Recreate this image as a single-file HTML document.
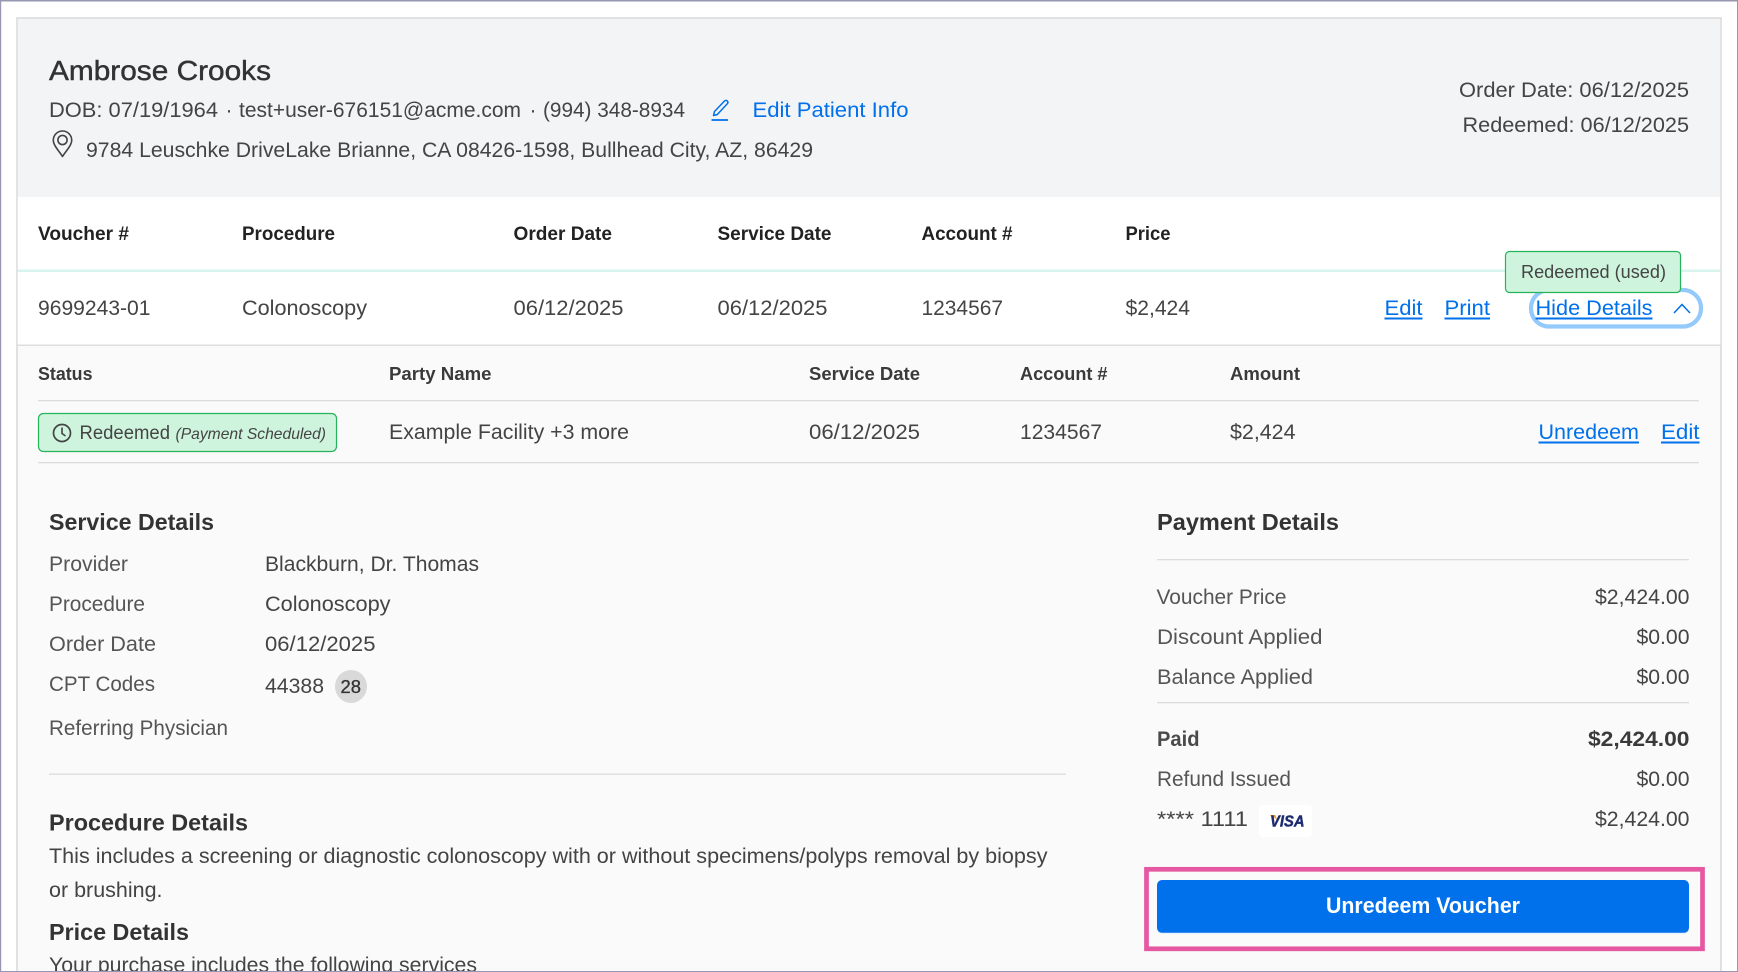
<!DOCTYPE html>
<html lang="en">
<head>
<meta charset="utf-8">
<title>Voucher Details</title>
<style>
html,body{margin:0;padding:0;background:#fff;width:1738px;height:972px;overflow:hidden}
svg{display:block}
text{font-family:"Liberation Sans",sans-serif;font-size:21px;fill:#444;}
.b{font-weight:700}
.h{font-weight:700;font-size:19px;fill:#222}
.s{font-weight:700;font-size:18.5px;fill:#3a3a3a}
.t{font-weight:700;font-size:23.5px;fill:#333}
.l{fill:#0070eb}
.d{fill:#555}
</style>
</head>
<body>
<svg width="1738" height="972" viewBox="0 0 1738 972" xmlns="http://www.w3.org/2000/svg">
<rect width="1738" height="972" fill="#fff"/>
<rect x="17" y="18" width="1704" height="960" fill="#fafafa" stroke="#d8d8d8" stroke-width="1.5"/>
<rect x="17.7" y="19" width="1702.6" height="178" fill="#f3f4f6"/>
<rect x="17.7" y="197" width="1702.6" height="148" fill="#fff"/>
<rect x="17.7" y="269.5" width="1702.6" height="2.5" fill="#d9f4ee"/>
<rect x="17.7" y="344.5" width="1702.6" height="1.5" fill="#dedede"/>

<text x="49" y="80" textLength="222" lengthAdjust="spacingAndGlyphs" style="font-size:28px;fill:#333;stroke:#333;stroke-width:.45">Ambrose Crooks</text>
<text x="49" y="117" textLength="169" lengthAdjust="spacingAndGlyphs">DOB: 07/19/1964</text>
<text x="225.500" y="117">·</text>
<text x="239" y="117" textLength="282" lengthAdjust="spacingAndGlyphs">test+user-676151@acme.com</text>
<text x="529.500" y="117">·</text>
<text x="543" y="117" textLength="142" lengthAdjust="spacingAndGlyphs">(994) 348-8934</text>
<g fill="none" stroke="#0070eb" stroke-width="1.5">
<path d="M713.5 115.5l1-4 10-10.5c1-.9 2-.9 2.8 0s.8 2 0 2.800l-10 10.700z" stroke-linejoin="round"/>
<path d="M711.500 120h16.500" stroke-width="1.800"/>
</g>
<text class="l" x="752.500" y="117" textLength="156" lengthAdjust="spacingAndGlyphs">Edit Patient Info</text>
<g fill="none" stroke="#444" stroke-width="1.600">
<path d="M62.500 156.500c-3-5-9.200-11-9.200-16.300a9.200 9.200 0 0 1 18.400 0c0 5.300-6.200 11.300-9.200 16.300z" stroke-linejoin="round"/>
<circle cx="62.500" cy="140" r="4.600"/>
</g>
<text x="86" y="157" textLength="727" lengthAdjust="spacingAndGlyphs">9784 Leuschke DriveLake Brianne, CA 08426-1598, Bullhead City, AZ, 86429</text>
<text x="1459" y="97" textLength="230" lengthAdjust="spacingAndGlyphs">Order Date: 06/12/2025</text>
<text x="1462.500" y="132" textLength="226.500" lengthAdjust="spacingAndGlyphs">Redeemed: 06/12/2025</text>

<text class="h" x="38" y="240" textLength="91" lengthAdjust="spacingAndGlyphs">Voucher #</text>
<text class="h" x="242" y="240" textLength="93" lengthAdjust="spacingAndGlyphs">Procedure</text>
<text class="h" x="513.500" y="240" textLength="98.500" lengthAdjust="spacingAndGlyphs">Order Date</text>
<text class="h" x="717.500" y="240" textLength="114" lengthAdjust="spacingAndGlyphs">Service Date</text>
<text class="h" x="921.500" y="240" textLength="91" lengthAdjust="spacingAndGlyphs">Account #</text>
<text class="h" x="1125.500" y="240" textLength="45" lengthAdjust="spacingAndGlyphs">Price</text>

<text x="38" y="315" textLength="112.500" lengthAdjust="spacingAndGlyphs">9699243-01</text>
<text x="242" y="315" textLength="125" lengthAdjust="spacingAndGlyphs">Colonoscopy</text>
<text x="513.500" y="315" textLength="110" lengthAdjust="spacingAndGlyphs">06/12/2025</text>
<text x="717.500" y="315" textLength="110" lengthAdjust="spacingAndGlyphs">06/12/2025</text>
<text x="921.500" y="315" textLength="81.500" lengthAdjust="spacingAndGlyphs">1234567</text>
<text x="1125.500" y="315" textLength="64.500" lengthAdjust="spacingAndGlyphs">$2,424</text>

<text class="l" x="1384.500" y="315" textLength="38" lengthAdjust="spacingAndGlyphs">Edit</text>
<rect x="1384.500" y="317.500" width="38" height="2" fill="#0070eb"/>
<text class="l" x="1444.500" y="315" textLength="45.500" lengthAdjust="spacingAndGlyphs">Print</text>
<rect x="1444.500" y="317.500" width="45.500" height="2" fill="#0070eb"/>
<rect x="1531" y="290" width="170" height="36.500" rx="18" fill="#fff" stroke="#93c9fb" stroke-width="4.200"/>
<text class="l" x="1535.500" y="315" textLength="117" lengthAdjust="spacingAndGlyphs">Hide Details</text>
<rect x="1535.500" y="317.500" width="117" height="2" fill="#0070eb"/>
<path d="M1674 313l8-8.500 8 8.500" fill="none" stroke="#0070eb" stroke-width="1.500"/>
<rect x="1505.500" y="251.500" width="175" height="41" rx="4" fill="#cff4dd" stroke="#25b35c" stroke-width="1.200"/>
<text x="1521" y="278" textLength="145" lengthAdjust="spacingAndGlyphs" style="font-size:18px">Redeemed (used)</text>

<text class="s" x="38" y="380" textLength="54.500" lengthAdjust="spacingAndGlyphs">Status</text>
<text class="s" x="389" y="380" textLength="102.500" lengthAdjust="spacingAndGlyphs">Party Name</text>
<text class="s" x="809" y="380" textLength="111" lengthAdjust="spacingAndGlyphs">Service Date</text>
<text class="s" x="1020" y="380" textLength="87.500" lengthAdjust="spacingAndGlyphs">Account #</text>
<text class="s" x="1230" y="380" textLength="70" lengthAdjust="spacingAndGlyphs">Amount</text>
<rect x="38" y="400" width="1661" height="1.300" fill="#dcdcdc"/>
<rect x="38.500" y="413.500" width="298" height="38" rx="5" fill="#cff4dd" stroke="#25b35c" stroke-width="1.200"/>
<circle cx="62" cy="433" r="8.500" fill="none" stroke="#444" stroke-width="1.700"/>
<path d="M62 427.500v6l3.500 2.500" fill="none" stroke="#444" stroke-width="1.600"/>
<text x="79.500" y="439" textLength="90.500" lengthAdjust="spacingAndGlyphs" style="font-size:19.500px">Redeemed</text>
<text x="175.500" y="439" textLength="150.500" lengthAdjust="spacingAndGlyphs" style="font-size:16px;font-style:italic">(Payment Scheduled)</text>
<text x="389" y="439" textLength="240" lengthAdjust="spacingAndGlyphs">Example Facility +3 more</text>
<text x="809" y="439" textLength="111" lengthAdjust="spacingAndGlyphs">06/12/2025</text>
<text x="1020" y="439" textLength="82" lengthAdjust="spacingAndGlyphs">1234567</text>
<text x="1230" y="439" textLength="65.500" lengthAdjust="spacingAndGlyphs">$2,424</text>
<text class="l" x="1538.500" y="439" textLength="100.500" lengthAdjust="spacingAndGlyphs">Unredeem</text>
<rect x="1538.500" y="441.500" width="100.500" height="2" fill="#0070eb"/>
<text class="l" x="1661" y="439" textLength="38.500" lengthAdjust="spacingAndGlyphs">Edit</text>
<rect x="1661" y="441.500" width="38.500" height="2" fill="#0070eb"/>
<rect x="38" y="462" width="1661" height="1.300" fill="#dcdcdc"/>

<text class="t" x="49" y="530" textLength="165" lengthAdjust="spacingAndGlyphs">Service Details</text>
<text class="d" x="49" y="571" textLength="79" lengthAdjust="spacingAndGlyphs">Provider</text>
<text x="265" y="571" textLength="214" lengthAdjust="spacingAndGlyphs">Blackburn, Dr. Thomas</text>
<text class="d" x="49" y="611" textLength="96" lengthAdjust="spacingAndGlyphs">Procedure</text>
<text x="265" y="611" textLength="125.500" lengthAdjust="spacingAndGlyphs">Colonoscopy</text>
<text class="d" x="49" y="651" textLength="107" lengthAdjust="spacingAndGlyphs">Order Date</text>
<text x="265" y="651" textLength="110.500" lengthAdjust="spacingAndGlyphs">06/12/2025</text>
<text class="d" x="49" y="691" textLength="106" lengthAdjust="spacingAndGlyphs">CPT Codes</text>
<text x="265" y="693" textLength="59" lengthAdjust="spacingAndGlyphs">44388</text>
<ellipse cx="351" cy="686.500" rx="16" ry="16.500" fill="#d9d9d9"/>
<text x="340.500" y="693" textLength="20.500" lengthAdjust="spacingAndGlyphs" style="font-size:18px;fill:#333;stroke:#333;stroke-width:.3">28</text>
<text class="d" x="49" y="735" textLength="179" lengthAdjust="spacingAndGlyphs">Referring Physician</text>
<rect x="49" y="773.500" width="1017" height="1.300" fill="#dcdcdc"/>
<text class="t" x="49" y="830.500" textLength="199" lengthAdjust="spacingAndGlyphs">Procedure Details</text>
<text x="49" y="863" textLength="998.500" lengthAdjust="spacingAndGlyphs">This includes a screening or diagnostic colonoscopy with or without specimens/polyps removal by biopsy</text>
<text x="49" y="897" textLength="113.500" lengthAdjust="spacingAndGlyphs">or brushing.</text>
<text class="t" x="49" y="940" textLength="140" lengthAdjust="spacingAndGlyphs">Price Details</text>
<text x="49" y="972" textLength="428" lengthAdjust="spacingAndGlyphs">Your purchase includes the following services</text>

<text class="t" x="1157" y="530" textLength="182" lengthAdjust="spacingAndGlyphs">Payment Details</text>
<rect x="1157" y="559" width="532" height="1.300" fill="#dcdcdc"/>
<text class="d" x="1156.500" y="604" textLength="130" lengthAdjust="spacingAndGlyphs">Voucher Price</text>
<text x="1595" y="604" textLength="94.500" lengthAdjust="spacingAndGlyphs">$2,424.00</text>
<text class="d" x="1157" y="644" textLength="165.500" lengthAdjust="spacingAndGlyphs">Discount Applied</text>
<text x="1636.500" y="644" textLength="53" lengthAdjust="spacingAndGlyphs">$0.00</text>
<text class="d" x="1157" y="684" textLength="156" lengthAdjust="spacingAndGlyphs">Balance Applied</text>
<text x="1636.500" y="684" textLength="53" lengthAdjust="spacingAndGlyphs">$0.00</text>
<rect x="1157" y="702" width="532" height="1.300" fill="#dcdcdc"/>
<text class="b" x="1157" y="746" textLength="42.500" lengthAdjust="spacingAndGlyphs" style="fill:#4a4a4a">Paid</text>
<text class="b" x="1588" y="746" textLength="101.500" lengthAdjust="spacingAndGlyphs" style="fill:#3a3a3a">$2,424.00</text>
<text class="d" x="1157" y="786" textLength="134" lengthAdjust="spacingAndGlyphs">Refund Issued</text>
<text x="1636.500" y="786" textLength="53" lengthAdjust="spacingAndGlyphs">$0.00</text>
<text x="1157" y="826" textLength="91" lengthAdjust="spacingAndGlyphs">**** 1111</text>
<rect x="1259" y="805" width="53" height="32" rx="4" fill="#fff"/>
<path d="M1269 815h6.500l2 6.500c-1.500-3-4.500-5.500-8.500-6.500z" fill="#f0a030"/>
<text x="1270" y="826.500" textLength="34.500" lengthAdjust="spacingAndGlyphs" style="font-size:16px;font-weight:700;font-style:italic;fill:#1c2a6e;stroke:#1c2a6e;stroke-width:.4">VISA</text>
<text x="1595" y="826" textLength="94.500" lengthAdjust="spacingAndGlyphs">$2,424.00</text>

<rect x="1146.500" y="869.300" width="556" height="79.500" fill="none" stroke="#e557a0" stroke-width="4.700"/>
<rect x="1157" y="881" width="532" height="53" rx="5" fill="#e4f0fc"/>
<rect x="1157" y="880" width="532" height="52.800" rx="5" fill="#0070eb"/>
<text x="1326" y="913" textLength="194" lengthAdjust="spacingAndGlyphs" style="font-size:22px;font-weight:700;fill:#fff">Unredeem Voucher</text>

<rect x="0" y="0" width="1738" height="1.500" fill="#9897b2"/>
<rect x="0" y="0" width="1.200" height="972" fill="#9897b2"/>
<rect x="1737" y="0" width="1" height="972" fill="#9897b2"/>
<rect x="0" y="971" width="1738" height="1" fill="#9897b2"/>
</svg>
</body>
</html>
